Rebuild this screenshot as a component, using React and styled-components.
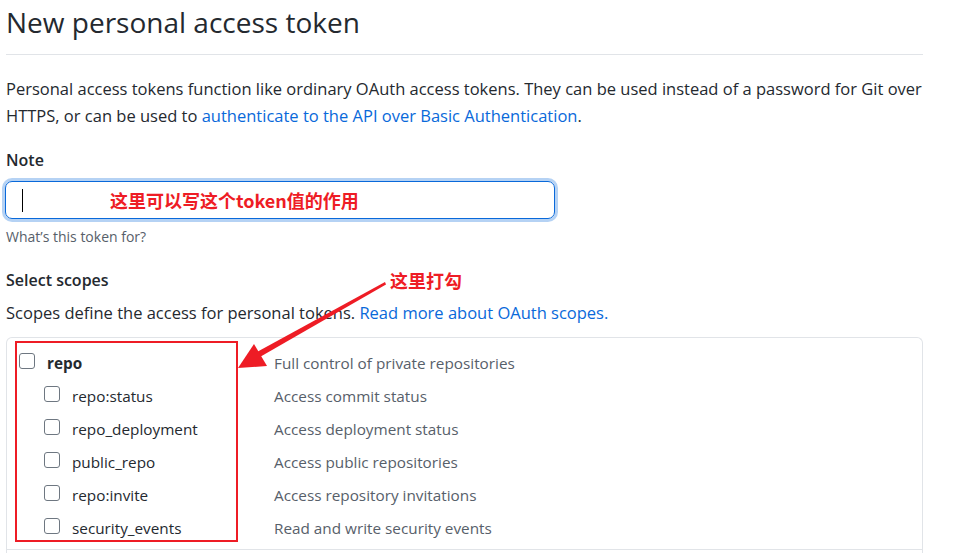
import React from "react";
import styled, { createGlobalStyle } from "styled-components";

const GlobalStyle = createGlobalStyle`
  html, body {
    margin: 0;
    padding: 0;
    background: #ffffff;
    overflow: hidden;
  }
  body {
    font-family: "Open Sans", "Noto Sans", "Noto Sans CJK SC", sans-serif;
    color: #24292f;
  }
`;

const Page = styled.div`
  position: relative;
  width: 917px;
  padding: 0 0 0 6px;
`;

const Title = styled.h1`
  margin: 0;
  padding-top: 3px;
  font-size: 28px;
  font-weight: 400;
  line-height: 38px;
  color: #24292f;
  padding-bottom: 13px;
  border-bottom: 1px solid #e1e4e8;
`;

const Lead = styled.p`
  margin: 20px 0 0;
  font-size: 16.5px;
  line-height: 27px;
  white-space: nowrap;
`;

const Link = styled.a`
  color: #0969da;
  text-decoration: none;
`;

const Label = styled.div`
  margin-top: ${({ $top }) => $top}px;
  font-size: 16px;
  font-weight: 600;
  line-height: 24px;
`;

const FieldWrap = styled.div`
  display: flex;
  align-items: center;
  gap: 87px;
  margin-top: 9px;
  margin-left: -1px;
  padding-left: 16px;
  width: 550px;
  height: 38px;
  border: 1px solid #0969da;
  border-radius: 7px;
  box-shadow: 0 0 0 3px rgba(9, 105, 218, 0.3);
  box-sizing: border-box;
`;

const Caret = styled.span`
  width: 1px;
  height: 23px;
  background: #000;
`;

const Note = styled.span`
  font-family: "Noto Sans CJK SC", "Open Sans", sans-serif;
  font-weight: 700;
  font-size: 18px;
  line-height: 20px;
  color: #ee1c25;
  white-space: nowrap;
`;

const Callout = styled(Note)`
  position: absolute;
  left: 390px;
  top: 270px;
`;

const Hint = styled.div`
  margin-top: 8px;
  font-size: 14px;
  line-height: 20px;
  color: #57606a;
`;

const Desc = styled.p`
  margin: 9px 0 0;
  font-size: 16.5px;
  line-height: 24px;
`;

const ScopeBox = styled.div`
  position: relative;
  margin-top: 12px;
  border: 1px solid #e1e4e8;
  border-bottom: none;
  border-radius: 6px 6px 0 0;
`;

const Group = styled.div`
  padding: 8px 0 5px;
  border-bottom: 1px solid #e1e4e8;
  min-height: ${({ $min }) => $min || 0}px;
`;

const Row = styled.div`
  display: grid;
  grid-template-columns: 255px 1fr;
  align-items: center;
  height: 33px;
  padding-left: 12px;
`;

const Name = styled.label`
  display: flex;
  align-items: center;
  gap: 12px;
  padding-left: ${({ $sub }) => ($sub ? 25 : 0)}px;
  font-size: 15.3px;
  font-weight: ${({ $bold }) => ($bold ? 700 : 400)};
  color: #24292f;
`;

const Box = styled.span`
  display: inline-block;
  width: 14px;
  height: 14px;
  border: 1px solid #6e7781;
  border-radius: 3px;
  background: #fff;
  position: relative;
  top: -2px;
`;

const ScopeText = styled.span`
  font-size: 15.3px;
  color: #57606a;
`;

const Highlight = styled.div`
  position: absolute;
  left: 8px;
  top: 3px;
  width: 219px;
  height: 197px;
  border: 2px solid #ee1c25;
`;

const ArrowSvg = styled.svg`
  position: absolute;
  left: 0;
  top: 0;
  pointer-events: none;
`;

const scopes = [
  { name: "repo:status", text: "Access commit status" },
  { name: "repo_deployment", text: "Access deployment status" },
  { name: "public_repo", text: "Access public repositories" },
  { name: "repo:invite", text: "Access repository invitations" },
  { name: "security_events", text: "Read and write security events" },
];

const Arrow = () => (
  <ArrowSvg width="971" height="553" viewBox="0 0 971 553">
    <polygon points="385,282 386,284.5 259,357.5 256,352.5" fill="#ee1c25" />
    <polygon points="238,368 254,344 267,366" fill="#ee1c25" />
  </ArrowSvg>
);

export default function App() {
  return (
    <>
      <GlobalStyle />
      <Page>
        <Title>New personal access token</Title>
        <Lead>
          Personal access tokens function like ordinary OAuth access tokens. They can be used instead of a password for Git over
          <br />
          HTTPS, or can be used to <Link href="#">authenticate to the API over Basic Authentication</Link>.
        </Lead>

        <Label $top={19}>Note</Label>
        <FieldWrap>
          <Caret />
          <Note>这里可以写这个token值的作用</Note>
        </FieldWrap>
        <Hint>What’s this token for?</Hint>

        <Label $top={21}>Select scopes</Label>
        <Desc>
          Scopes define the access for personal tokens. <Link href="#">Read more about OAuth scopes.</Link>
        </Desc>

        <ScopeBox>
          <Group>
            <Row>
              <Name $bold>
                <Box />
                repo
              </Name>
              <ScopeText>Full control of private repositories</ScopeText>
            </Row>
            {scopes.map((s) => (
              <Row key={s.name}>
                <Name $sub>
                  <Box />
                  {s.name}
                </Name>
                <ScopeText>{s.text}</ScopeText>
              </Row>
            ))}
          </Group>
          <Group $min={40} />
          <Highlight />
        </ScopeBox>

        <Callout>这里打勾</Callout>
        <Arrow />
      </Page>
    </>
  );
}
